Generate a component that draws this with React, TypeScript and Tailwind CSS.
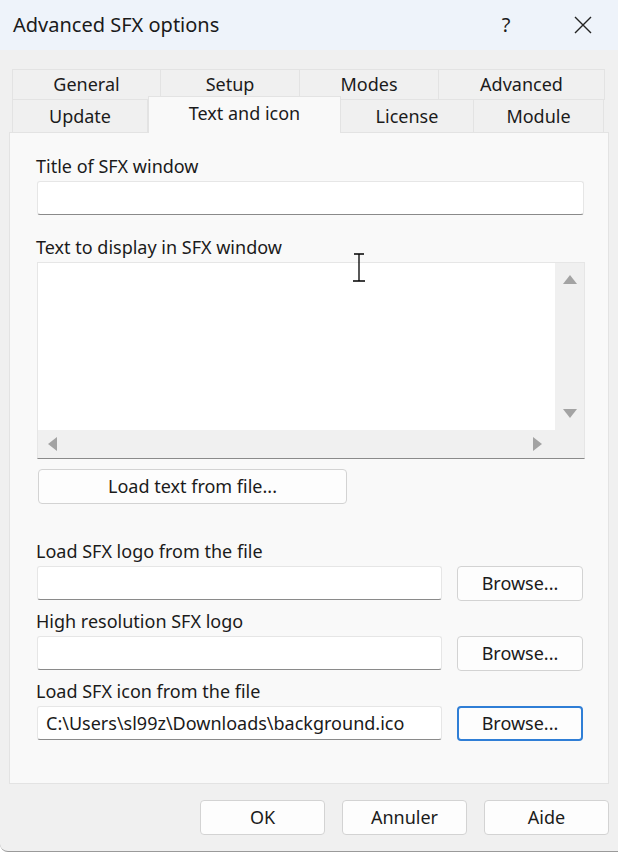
import React from "react";

function Tab({ label, w, active }: { label: string; w: string; active?: boolean }) {
  if (active) {
    return (
      <div
        className={`${w} relative z-10 -mt-[3px] h-[37px] flex items-start justify-center pt-[3px] bg-[#f9f9f9] border-x border-t border-[#e3e3e3] text-[18px]`}
      >
        {label}
      </div>
    );
  }
  return (
    <div
      className={`${w} h-full flex items-center justify-center bg-[#f0f0f0] border border-[#e3e3e3] -ml-px first:ml-0 text-[18px]`}
    >
      {label}
    </div>
  );
}

function Field({ value, w }: { value?: string; w: string }) {
  return (
    <div
      className={`${w} h-[34px] flex items-center px-[8px] bg-white border border-[#e6e6e6] border-b-[#8a8a8a] rounded-[3px] text-[18px] text-[#1a1a1a]`}
    >
      {value}
    </div>
  );
}

function Btn({ label, w, focus }: { label: string; w: string; focus?: boolean }) {
  return (
    <div
      className={`${w} h-[35px] flex items-center justify-center rounded-[4px] bg-[#fdfdfd] text-[18px] ${
        focus ? "border-2 border-[#2f7ed6]" : "border border-[#d3d3d3]"
      }`}
    >
      {label}
    </div>
  );
}

function Label({ text }: { text: string }) {
  return <div className="h-[22px] leading-[22px] text-[18px] -ml-px">{text}</div>;
}

export default function App() {
  return (
    <div className="relative w-[618px] h-[852px] flex flex-col bg-[#f0f0f0] text-[#1b1b1b] font-['Noto_Sans','Open_Sans',sans-serif] border-b border-[#9a9a9a] rounded-bl-[8px] overflow-hidden">
      {/* title bar */}
      <div className="h-[50px] shrink-0 flex items-center bg-[#eef3fa] pl-[13px]">
        <div className="text-[20px] text-[#1a1a1a]">Advanced SFX options</div>
        <div className="ml-auto w-[20px] text-center text-[20px] mr-[58px]">?</div>
        <svg width="18" height="18" viewBox="0 0 18 18" className="mr-[26px]">
          <path d="M1 1 L17 17 M17 1 L1 17" stroke="#222" strokeWidth="1.4" />
        </svg>
      </div>

      {/* tabs */}
      <div className="mt-[19px] pl-[12px] flex h-[31px] w-[605px]">
        <Tab label="General" w="w-[149px]" />
        <Tab label="Setup" w="w-[140px]" />
        <Tab label="Modes" w="w-[140px]" />
        <Tab label="Advanced" w="w-[167px]" />
      </div>
      <div className="pl-[12px] flex h-[34px] w-[605px] -mt-px items-stretch">
        <Tab label="Update" w="w-[136px]" />
        <Tab label="Text and icon" w="w-[193px]" active />
        <Tab label="License" w="w-[134px]" />
        <Tab label="Module" w="w-[131px]" />
      </div>

      {/* panel */}
      <div className="ml-[9px] w-[600px] h-[652px] -mt-px bg-[#f9f9f9] border border-[#e3e3e3] pl-[27px] pt-[22px] flex flex-col">
        <Label text="Title of SFX window" />
        <div className="mt-[4px]">
          <Field w="w-[547px]" />
        </div>

        <div className="mt-[21px]">
          <Label text="Text to display in SFX window" />
        </div>
        <div className="mt-[4px] w-[548px] h-[197px] bg-[#f0f0f0] border border-[#e6e6e6] border-b-[#8a8a8a] flex flex-col">
          <div className="flex flex-1">
            <div className="flex-1 bg-white" />
            <div className="w-[29px] flex flex-col items-center justify-between py-[12px]">
              <svg width="14" height="9" viewBox="0 0 14 9">
                <path d="M7 0 L14 9 L0 9 Z" fill="#a3a3a3" />
              </svg>
              <svg width="14" height="9" viewBox="0 0 14 9">
                <path d="M0 0 L14 0 L7 9 Z" fill="#a3a3a3" />
              </svg>
            </div>
          </div>
          <div className="h-[28px] flex items-center pl-[10px] pr-[42px] justify-between">
            <svg width="9" height="14" viewBox="0 0 9 14">
              <path d="M9 0 L9 14 L0 7 Z" fill="#a3a3a3" />
            </svg>
            <svg width="9" height="14" viewBox="0 0 9 14">
              <path d="M0 0 L9 7 L0 14 Z" fill="#a3a3a3" />
            </svg>
          </div>
        </div>

        <div className="mt-[10px] ml-px">
          <Btn label="Load text from file..." w="w-[309px]" />
        </div>

        <div className="mt-[36px]">
          <Label text="Load SFX logo from the file" />
        </div>
        <div className="mt-[4px] flex gap-[15px]">
          <Field w="w-[405px]" />
          <Btn label="Browse..." w="w-[126px]" />
        </div>

        <div className="mt-[9px]">
          <Label text="High resolution SFX logo" />
        </div>
        <div className="mt-[4px] flex gap-[15px]">
          <Field w="w-[405px]" />
          <Btn label="Browse..." w="w-[126px]" />
        </div>

        <div className="mt-[9px]">
          <Label text="Load SFX icon from the file" />
        </div>
        <div className="mt-[4px] flex gap-[15px]">
          <Field w="w-[405px]" value="C:\Users\sl99z\Downloads\background.ico" />
          <Btn label="Browse..." w="w-[126px]" focus />
        </div>
      </div>

      {/* bottom buttons */}
      <div className="mt-[16px] flex justify-end gap-[17px] pr-[9px]">
        <Btn label="OK" w="w-[125px]" />
        <Btn label="Annuler" w="w-[125px]" />
        <Btn label="Aide" w="w-[125px]" />
      </div>

      {/* mouse cursor */}
      <svg width="14" height="30" viewBox="0 0 14 30" className="absolute left-[352px] top-[253px]">
        <path d="M2 1 H12 M7 1 V28 M1 28 H13" stroke="#000" strokeWidth="1.3" />
      </svg>
    </div>
  );
}
